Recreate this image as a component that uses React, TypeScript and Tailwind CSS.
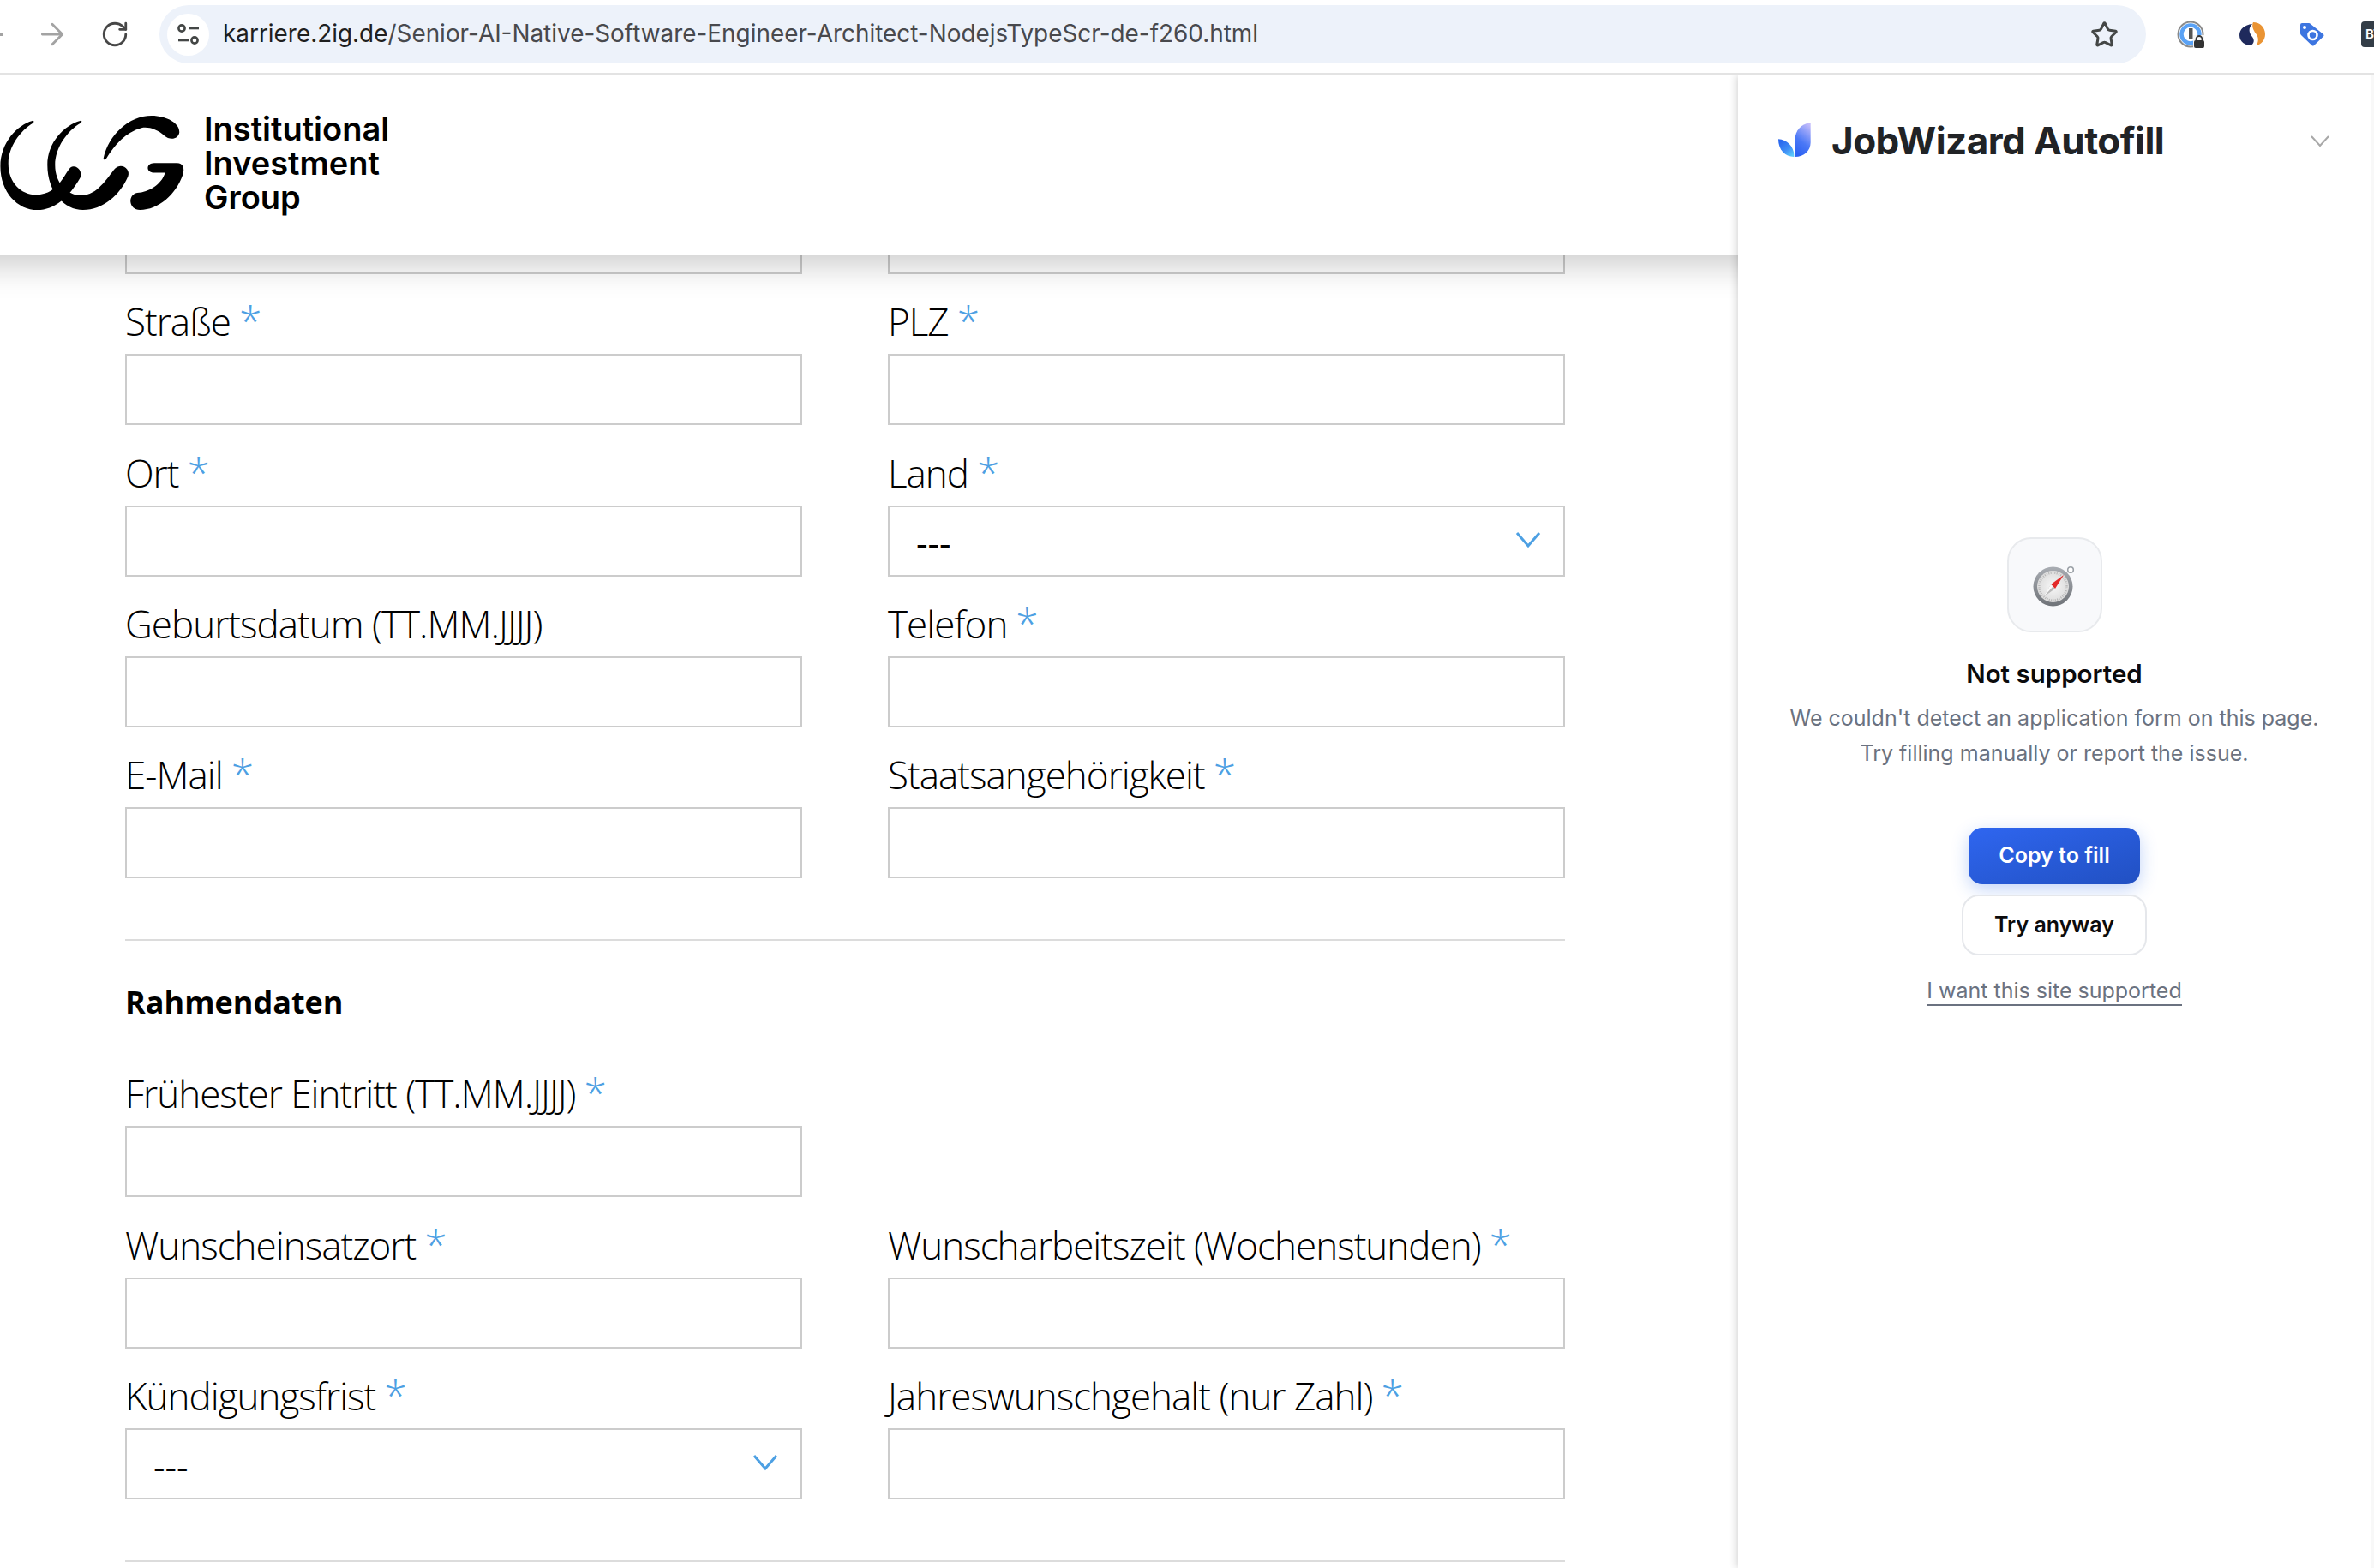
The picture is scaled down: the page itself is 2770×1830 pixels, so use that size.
import { RotateCw, ArrowRight, Star } from "lucide-react";

function Req({ label, req = true }: { label: string; req?: boolean }) {
  return (
    <div className="h-[93.3px] flex items-end pb-[8px] text-[44px] leading-[60px] font-light text-black font-['Open_Sans',sans-serif] tracking-[-1px] whitespace-nowrap">
      <span>{label}</span>
      {req && <span className="ml-[10px] text-[48px] leading-[60px] text-[#4da0e3] -translate-y-[1px]">*</span>}
    </div>
  );
}

function Field({ label, req = true, select = false }: { label: string; req?: boolean; select?: boolean }) {
  return (
    <div className="flex flex-col">
      <Req label={label} req={req} />
      <div className="h-[83px] border-[2.5px] border-[#cccccc] bg-white flex items-center justify-between pl-[31px] pr-[26px]">
        {select && (
          <>
            <span className="text-[42px] leading-[50px] pt-[4px] font-['Open_Sans',sans-serif] text-black">---</span>
            <svg width="30" height="20" viewBox="0 0 30 20" fill="none" className="-mt-[3px]">
              <path d="M2 2 L15 17 L28 2" stroke="#4da0e3" strokeWidth="3" />
            </svg>
          </>
        )}
      </div>
    </div>
  );
}

function Logo() {
  return (
    <svg width="217" height="143" viewBox="0 0 650 430" fill="#000" className="shrink-0 mb-[22px]">
      <path d="M112 90 C60 105 0 165 0 250 C0 340 60 403 130 403 C190 403 240 360 280 290 C290 265 265 240 245 255 C225 275 205 345 130 350 C75 352 28 310 28 240 C28 180 70 125 115 98 C120 92 116 88 112 90Z" />
      <path d="M280 90 C225 105 165 165 165 245 C165 340 225 403 290 403 C360 403 420 350 448 285 C458 260 425 235 402 258 C375 290 340 352 285 352 C235 352 192 310 192 245 C192 185 235 125 282 98 C288 92 285 88 280 90Z" />
      <path d="M362 220 C380 140 450 72 530 72 C585 72 630 100 628 130 C625 155 595 160 575 142 C550 120 520 110 495 115 C440 130 400 175 372 222 C368 228 360 228 362 220Z" />
      <path d="M540 238 L620 238 C640 238 648 255 640 280 C615 350 555 403 490 403 C450 403 445 350 480 343 C520 340 565 315 578 272 L540 272 C510 272 510 238 540 238Z" />
    </svg>
  );
}

function Compass() {
  return (
    <svg width="50" height="50" viewBox="0 0 50 50">
      <defs>
        <linearGradient id="ring" x1="0" y1="0" x2="0" y2="1">
          <stop offset="0" stopColor="#a9adb3" />
          <stop offset="1" stopColor="#6f7378" />
        </linearGradient>
        <radialGradient id="disc">
          <stop offset="0" stopColor="#f7f7f7" />
          <stop offset="1" stopColor="#dcdcdc" />
        </radialGradient>
      </defs>
      <circle cx="44" cy="7" r="3.3" fill="#fff" stroke="#9aa0a6" strokeWidth="1.6" />
      <circle cx="23.5" cy="26.5" r="23" fill="url(#ring)" />
      <circle cx="23.5" cy="26.5" r="18.5" fill="url(#disc)" />
      <circle cx="23.5" cy="26.5" r="16" fill="none" stroke="#b5b5b5" strokeWidth="2.4" strokeDasharray="1 1.4" />
      <path d="M36 13 L21 24 L26 29Z" fill="#e32a2a" />
      <path d="M12 39 L21 24 L26 29Z" fill="#b9b9b9" />
      <path d="M12 39 L21 24 L23.5 26.5Z" fill="#fafafa" />
    </svg>
  );
}

function Tune() {
  return (
    <svg width="28" height="26" viewBox="0 0 28 26" fill="none" stroke="#444746" strokeWidth="2.6">
      <circle cx="6" cy="6" r="3.6" />
      <path d="M14 6 H26" />
      <path d="M2 20 H14" />
      <circle cx="21" cy="20" r="3.6" />
    </svg>
  );
}

function OnePassword() {
  return (
    <div className="relative w-[32px] h-[32px]">
      <svg width="32" height="32" viewBox="0 0 32 32" fill="none">
        <circle cx="16" cy="16" r="14.5" stroke="#8a8a8a" strokeWidth="2" />
        <circle cx="16" cy="16" r="10.5" stroke="#5aa2f5" strokeWidth="4.5" />
        <rect x="14" y="9" width="4.5" height="13" fill="#555" />
        <rect x="19" y="17" width="13" height="15" fill="#f5f5f5" />
        <rect x="20" y="23" width="12" height="9" rx="2" fill="#333" />
        <path d="M22.5 24 V21.5 a3.5 3.5 0 0 1 7 0 V24" stroke="#333" strokeWidth="1.8" />
      </svg>
    </div>
  );
}

function Simplify() {
  return (
    <svg width="30" height="28" viewBox="0 0 30 28">
      <path d="M15 2 C6 3 0 8 0 15 C0 23 7 27 13 27 C17 25 18 21 15 17 C11 12 10 7 15 2Z" fill="#1f2a5c" />
      <path d="M16 0 C24 0 30 6 30 14 C30 21 25 26 20 27 C23 21 22 17 19 13 C16 9 14 4 16 0Z" fill="#ea9434" />
    </svg>
  );
}

function TagIcon() {
  return (
    <svg width="28" height="27" viewBox="0 0 28 27">
      <path d="M2 0 H10 a3 3 0 0 1 2 1 L27 13 a2 2 0 0 1 0 2.5 L16 26 a2 2 0 0 1 -2.5 0 L1 14 a3 3 0 0 1 -1 -2 V2 a2 2 0 0 1 2 -2Z" fill="#3d75e0" />
      <circle cx="5" cy="5" r="2" fill="#fff" />
      <circle cx="14.5" cy="14" r="5" fill="none" stroke="#fff" strokeWidth="2.6" />
    </svg>
  );
}

function LeafLogo() {
  return (
    <svg width="38" height="40" viewBox="0 0 38 40" className="shrink-0">
      <defs>
        <linearGradient id="leafA" x1="0.75" y1="0" x2="0.4" y2="1">
          <stop offset="0" stopColor="#c3bcfb" />
          <stop offset="0.6" stopColor="#4a78f6" />
          <stop offset="1" stopColor="#2d62f2" />
        </linearGradient>
        <linearGradient id="leafB" x1="0.2" y1="0.1" x2="0.8" y2="1">
          <stop offset="0" stopColor="#2a68ef" />
          <stop offset="0.55" stopColor="#3f8df5" />
          <stop offset="1" stopColor="#5ccbfb" />
        </linearGradient>
      </defs>
      <path d="M37.7 0 V23 C37.7 33 30 40 19.5 40 V20 C19.5 9 27 1.5 37.7 0Z" fill="url(#leafA)" />
      <path d="M0 19.3 C10 20 18.3 28 18.3 38 V40 C8 40 0 32 0 19.3Z" fill="url(#leafB)" />
    </svg>
  );
}

export default function App() {
  return (
    <div className="w-[2770px] h-[1830px] overflow-hidden bg-white flex flex-col font-['Inter',sans-serif]">
      {/* Browser toolbar */}
      <div className="h-[88px] shrink-0 bg-white border-b-[3px] border-[#e3e3e3] flex items-start">
        <div className="w-[186px] h-[80px] flex items-center shrink-0">
          <div className="w-[3px] h-[3px] bg-[#a3a3a3] shrink-0" />
          <ArrowRight size={40} strokeWidth={1.7} className="ml-[38px] text-[#a3a3a3] shrink-0" />
          <RotateCw size={34} strokeWidth={2} className="ml-[36px] text-[#474747] shrink-0" />
        </div>
        <div className="mt-[6px] w-[2318px] h-[68px] rounded-full bg-[#edf2fa] flex items-center pl-[9px] pr-[32px] shrink-0">
          <div className="w-[49px] h-[49px] rounded-full bg-white flex items-center justify-center shrink-0">
            <Tune />
          </div>
          <div className="ml-[16px] flex-1 text-[27.9px] whitespace-nowrap text-[#48494d] font-['Inter',sans-serif]">
            <span className="text-[#1f1f1f]">karriere.2ig.de</span>/Senior-AI-Native-Software-Engineer-Architect-NodejsTypeScr-de-f260.html
          </div>
          <Star size={33} strokeWidth={2.2} className="text-[#444746]" />
        </div>
        <div className="h-[80px] flex items-center ml-[36px] gap-[41px]">
          <OnePassword />
          <Simplify />
          <TagIcon />
          <div className="w-[40px] h-[30px] rounded-[4px] bg-[#333d47] text-white text-[15px] font-semibold leading-[30px] pl-[5px] ml-[2px] shrink-0">BT</div>
        </div>
      </div>

      <div className="flex-1 flex min-h-0 overflow-hidden">
        {/* Page */}
        <div className="w-[2028px] shrink-0 flex flex-col overflow-hidden">
          <div className="relative z-10 h-[210px] shrink-0 -mx-[60px] px-[60px] bg-white shadow-[0_12px_36px_rgba(0,0,0,0.2)] flex items-center gap-[21px]">
            <Logo />
            <div className="text-[38px] leading-[40px] font-semibold text-black -mt-[6px]">
              <div>Institutional</div>
              <div>Investment</div>
              <div>Group</div>
            </div>
          </div>

          <div className="pl-[146px] pr-[202px] flex flex-col">
            <div className="grid grid-cols-[790px_790px] gap-x-[100px]">
              <div className="h-[22px] border-x-[2.5px] border-b-[2.5px] border-[#cccccc]" />
              <div className="h-[22px] border-x-[2.5px] border-b-[2.5px] border-[#cccccc]" />
              <Field label="Straße" />
              <Field label="PLZ" />
              <Field label="Ort" />
              <Field label="Land" select />
              <Field label="Geburtsdatum (TT.MM.JJJJ)" req={false} />
              <Field label="Telefon" />
              <Field label="E-Mail" />
              <Field label="Staatsangehörigkeit" />
            </div>

            <div className="mt-[71px] h-[2px] bg-[#dcdcdc]" />

            <h2 className="mt-[46px] text-[36px] leading-[52px] font-bold text-black font-['Open_Sans',sans-serif]">Rahmendaten</h2>

            <div className="mt-[25px] grid grid-cols-[790px_790px] gap-x-[100px]">
              <div className="col-start-1">
                <Field label="Frühester Eintritt (TT.MM.JJJJ)" />
              </div>
              <div />
              <Field label="Wunscheinsatzort" />
              <Field label="Wunscharbeitszeit (Wochenstunden)" />
              <Field label="Kündigungsfrist" select />
              <Field label="Jahreswunschgehalt (nur Zahl)" />
            </div>

            <div className="mt-[71px] h-[2px] bg-[#dcdcdc]" />
          </div>
        </div>

        {/* Side panel */}
        <div className="relative z-20 flex-1 bg-white shadow-[-3px_0_8px_rgba(0,0,0,0.14)] flex min-w-0">
          <div className="flex-1 flex flex-col min-w-0">
            <div className="h-[150px] shrink-0 flex items-start pl-[47px] pr-[48px] pt-[55px]">
              <LeafLogo />
              <div className="ml-[24px] text-[44px] leading-[50px] font-bold text-[#212326] tracking-[-0.55px] -mt-[4px] whitespace-nowrap">JobWizard Autofill</div>
              <svg width="22" height="13" viewBox="0 0 22 13" fill="none" className="ml-auto mt-[15px] shrink-0">
                <path d="M1 1 L11 12 L21 1" stroke="#a8a8a8" strokeWidth="2" />
              </svg>
            </div>

            <div className="flex flex-col items-center pt-[389px]">
              <div className="w-[111px] h-[111px] rounded-[28px] border-[2px] border-[#e8eaed] bg-[#f8f9fb] flex items-center justify-center">
                <Compass />
              </div>
              <div className="mt-[29px] text-[29.5px] leading-[38px] font-semibold text-[#0b0b0c]">Not supported</div>
              <p className="mt-[13px] text-[25px] leading-[41px] text-[#6b7280] text-center whitespace-nowrap">
                We couldn't detect an application form on this page.
                <br />
                Try filling manually or report the issue.
              </p>
              <button className="mt-[66px] w-[200px] h-[66px] rounded-[16px] bg-gradient-to-br from-[#2f66f0] to-[#2150c2] text-white text-[25px] font-semibold shadow-[0_6px_20px_rgba(37,99,235,0.28)]">
                Copy to fill
              </button>
              <button className="mt-[12px] w-[216px] h-[71px] rounded-[20px] border-[2px] border-[#e5e7eb] bg-white text-[#0b0b0c] text-[25px] font-semibold">
                Try anyway
              </button>
              <a className="mt-[25px] text-[25px] leading-[32px] text-[#6b7280] border-b-[2px] border-[#6b7280]">I want this site supported</a>
            </div>
          </div>
          <div className="w-[4px] bg-[#f8f8f8] shrink-0" />
        </div>
      </div>
    </div>
  );
}
